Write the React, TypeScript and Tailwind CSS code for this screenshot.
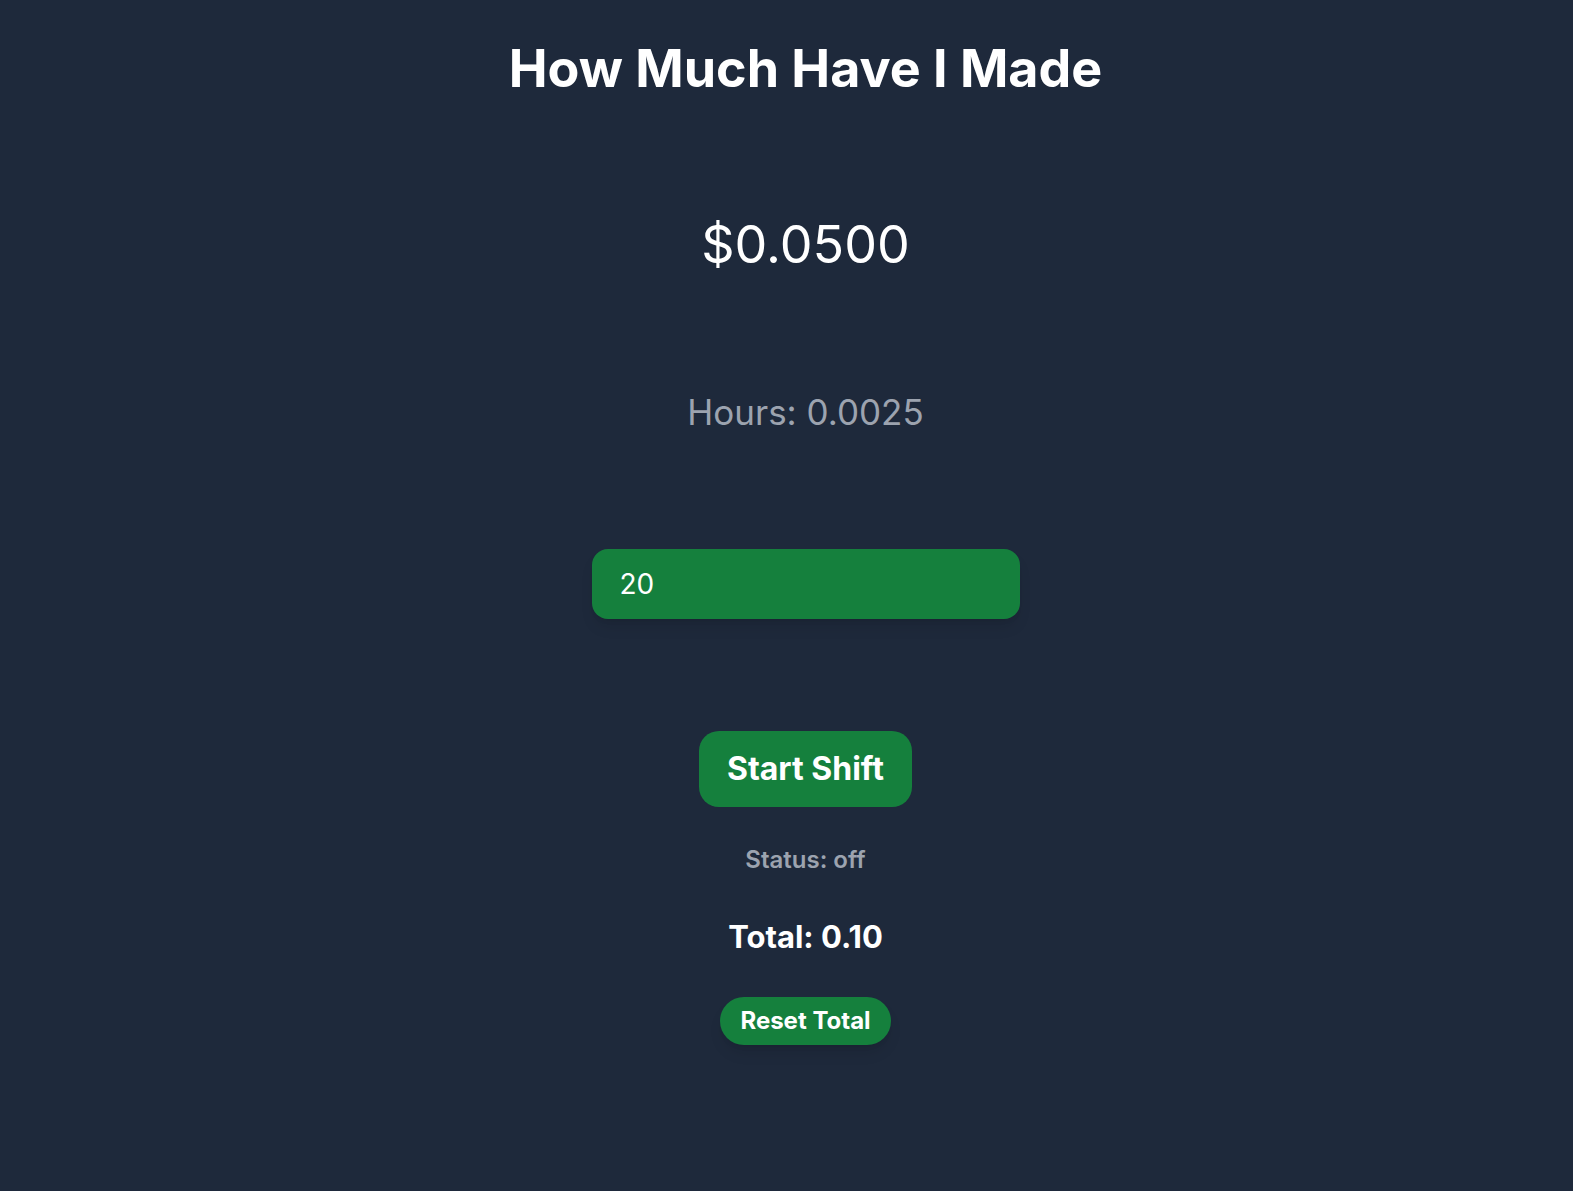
import React, { useState } from 'react';

const App: React.FC = () => {
  const [rate, setRate] = useState('20');

  return (
    <div className="min-h-screen bg-[#1e293b] flex flex-col items-center pl-[38px] text-white font-['Inter',sans-serif]">
      <h1 className="mt-[39px] text-[52px] leading-[60px] font-bold">How Much Have I Made</h1>

      <p className="mt-[116px] text-[52px] leading-[60px]">$0.0500</p>

      <p className="mt-[115px] text-[35px] leading-[44px] text-[#9ca3af]">Hours: 0.0025</p>

      <input
        type="text"
        value={rate}
        onChange={(e) => setRate(e.target.value)}
        className="mt-[115px] w-[428px] h-[70px] rounded-2xl bg-[#15803d] px-7 text-[28px] text-white shadow-lg outline-none"
      />

      <button className="mt-[112px] h-[76px] px-7 rounded-[20px] bg-[#15803d] text-[32px] font-bold">
        Start Shift
      </button>

      <p className="mt-[39px] text-[24px] leading-[28px] font-semibold text-[#9ca3af]">Status: off</p>

      <p className="mt-[45px] text-[31px] leading-[36px] font-bold">Total: 0.10</p>

      <button className="mt-[42px] h-[48px] px-5 rounded-full bg-[#15803d] text-[24px] font-bold shadow-lg">
        Reset Total
      </button>
    </div>
  );
};

export default App;
